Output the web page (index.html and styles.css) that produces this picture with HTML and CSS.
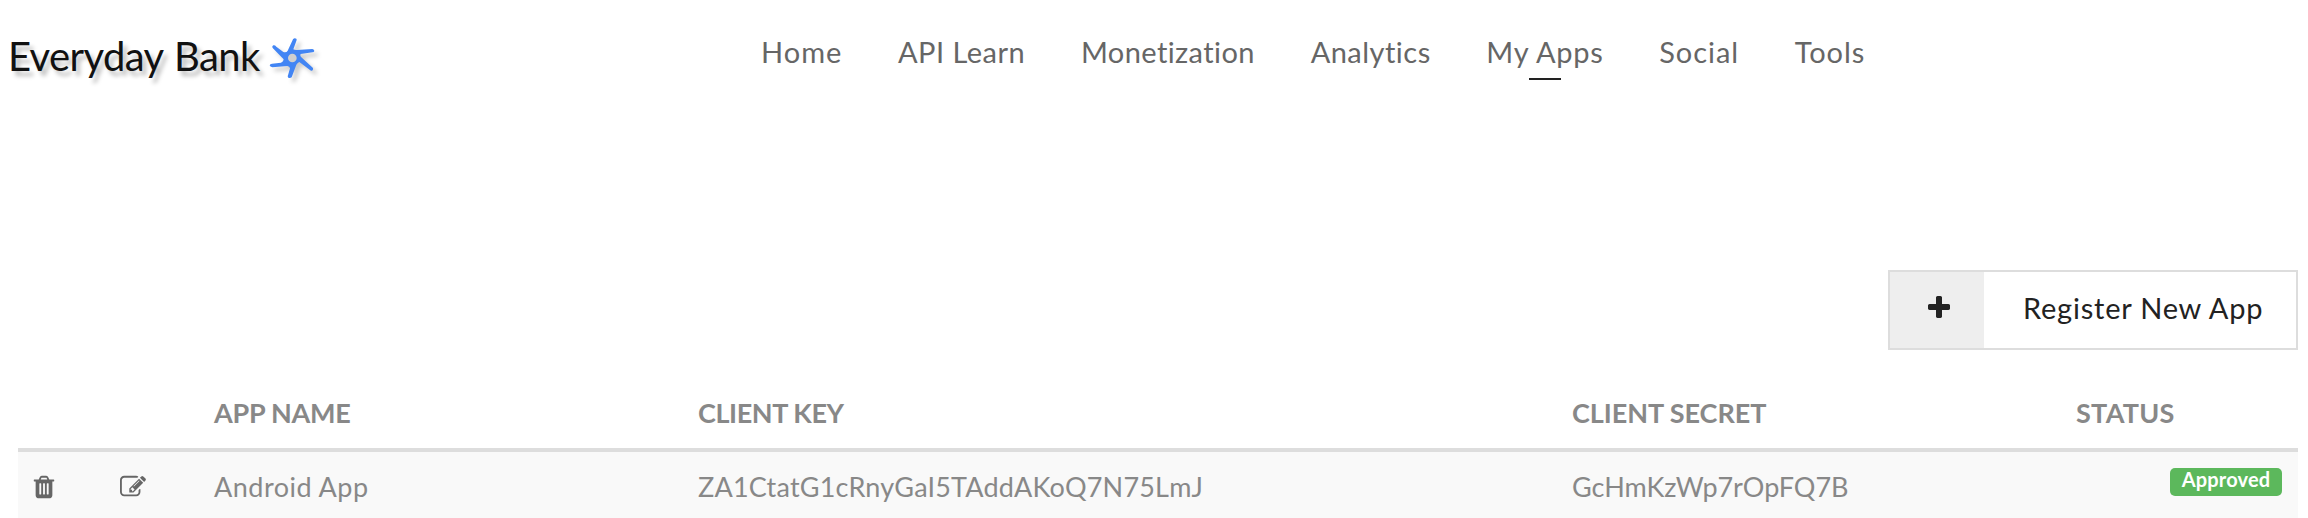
FILE: index.html
```
<!DOCTYPE html>
<html lang="en">
<head>
<meta charset="utf-8">
<title>My Apps</title>
<link rel="stylesheet" href="styles.css">
</head>
<body>
<header class="header">
  <a class="logo"><span class="logo-first">Everyday</span> <span class="logo-second">Bank</span>
    <svg class="logo-mark" viewBox="24 33 150 132">
      <path fill="#4285f4" d="M99 43Q103 38 109 41Q111 44 109 48L100 73Q105 76 111 75L157 72Q163 74 163 78Q162 82 157 82L122 87Q119 92 124 97L159 129Q160 135 156 137Q151 138 147 133L118 111Q113 113 109 119L95 157Q90 161 85 158Q82 155 84 151L90 130Q89 124 82 123L37 127Q30 126 29 121Q30 116 36 116L63 113Q71 110 71 103L38 69Q35 64 40 61Q45 60 49 65L70 81Q79 84 83 77Z"/>
      <circle cx="97" cy="99" r="13" fill="#cfcfcf"/>
    </svg>
  </a>
  <nav class="nav">
    <a class="nav-item home">Home</a>
    <a class="nav-item learn">API Learn</a>
    <a class="nav-item monetization">Monetization</a>
    <a class="nav-item analytics">Analytics</a>
    <a class="nav-item active">My Apps</a>
    <a class="nav-item social">Social</a>
    <a class="nav-item tools">Tools</a>
  </nav>
</header>
<main class="main">
  <div class="toolbar">
    <a class="register">
      <span class="register-icon"><svg class="plus" viewBox="0 0 1792 1792"><path d="M1600 736v192q0 40-28 68t-68 28h-416v416q0 40-28 68t-68 28h-192q-40 0-68-28t-28-68v-416h-416q-40 0-68-28t-28-68v-192q0-40 28-68t68-28h416v-416q0-40 28-68t68-28h192q40 0 68 28t28 68v416h416q40 0 68 28t28 68z"/></svg></span>
      <span class="register-text">Register New App</span>
    </a>
  </div>
  <div class="table">
    <div class="row head">
      <span></span><span></span>
      <span class="h-name">APP NAME</span>
      <span class="h-key">CLIENT KEY</span>
      <span class="h-secret">CLIENT SECRET</span>
      <span class="h-status">STATUS</span>
    </div>
    <div class="row body-row">
      <span><svg class="icon" viewBox="0 0 1792 1792"><path d="M704 1376v-704q0-14-9-23t-23-9h-64q-14 0-23 9t-9 23v704q0 14 9 23t23 9h64q14 0 23-9t9-23zm256 0v-704q0-14-9-23t-23-9h-64q-14 0-23 9t-9 23v704q0 14 9 23t23 9h64q14 0 23-9t9-23zm256 0v-704q0-14-9-23t-23-9h-64q-14 0-23 9t-9 23v704q0 14 9 23t23 9h64q14 0 23-9t9-23zm-544-992h448l-48-117q-7-9-17-11h-317q-10 2-17 11zm928 32v64q0 14-9 23t-23 9h-96v948q0 83-47 143.5t-113 60.5h-832q-66 0-113-58.5t-47-141.5v-952h-96q-14 0-23-9t-9-23v-64q0-14 9-23t23-9h309l70-167q15-37 54-63t79-26h320q40 0 79 26t54 63l70 167h309q14 0 23 9t9 23z"/></svg></span>
      <span><svg class="icon" viewBox="0 0 1792 1792"><path d="M888 1184l116-116-152-152-116 116v56h96v96h56zm440-720q-16-16-33 1l-350 350q-17 17-1 33t33-1l350-350q17-17 1-33zm80 594v190q0 119-84.5 203.5t-203.5 84.5h-832q-119 0-203.5-84.5t-84.5-203.5v-832q0-119 84.5-203.5t203.5-84.5h832q63 0 117 25 15 7 18 23 3 17-9 29l-49 49q-14 14-32 8-23-6-45-6h-832q-66 0-113 47t-47 113v832q0 66 47 113t113 47h832q66 0 113-47t47-113v-126q0-13 9-22l64-64q15-15 35-7t20 29zm-96-738l288 288-672 672h-288v-288zm444 132l-92 92-288-288 92-92q28-28 68-28t68 28l152 152q28 28 28 68t-28 68z"/></svg></span>
      <span class="c-name">Android App</span>
      <span class="c-key">ZA1CtatG1cRnyGaI5TAddAKoQ7N75LmJ</span>
      <span class="c-secret">GcHmKzWp7rOpFQ7B</span>
      <span class="c-status"><span class="badge">Approved</span></span>
    </div>
  </div>
</main>
</body>
</html>
```
FILE: styles.css
```
body {
  margin: 0;
  height: 518px;
  overflow: hidden;
  background: #fff;
  font-family: Lato, "Liberation Sans", sans-serif;
  white-space: nowrap;
}

.header {
  display: flex;
  height: 270px;
}

.logo {
  display: flex;
  align-items: flex-start;
  width: 753px;
  padding: 36px 0 0 8px;
  color: #111;
  font-size: 40px;
  line-height: 40px;
  letter-spacing: -0.6px;
  text-shadow: 4px 5px 4px rgba(0, 0, 0, 0.25);
}

.logo-first {
  width: 166px;
}

.logo-second {
  width: 86px;
}

.logo-mark {
  width: 50px;
  height: 44px;
  margin: 0 0 0 8px;
  filter: drop-shadow(4px 4px 2px rgba(0, 0, 0, 0.2));
}

.nav {
  display: flex;
  align-items: flex-start;
  gap: 55.7px;
  padding-top: 32px;
  color: #666;
  font-size: 29px;
  line-height: 40px;
}

.nav-item.home { letter-spacing: 1px; }
.nav-item.learn { letter-spacing: 0.48px; }
.nav-item.monetization { letter-spacing: 0.42px; }
.nav-item.analytics { letter-spacing: 0.48px; }
.nav-item.social { letter-spacing: 0.94px; }
.nav-item.tools { letter-spacing: 0.92px; }

.nav-item.active {
  display: flex;
  flex-direction: column;
  align-items: center;
  letter-spacing: 0.75px;
}

.nav-item.active::after {
  content: "";
  width: 32px;
  height: 2px;
  margin-top: 6px;
  background: #222;
}

.toolbar {
  display: flex;
  justify-content: flex-end;
  padding-right: 10px;
}

.register {
  box-sizing: border-box;
  display: flex;
  width: 410px;
  height: 80px;
  border: 2px solid #ddd;
  color: #222;
}

.register-icon {
  width: 94px;
  background: #eee;
}

.plus {
  display: block;
  width: 28px;
  height: 28px;
  margin: 22px 0 0 35px;
  fill: #222;
}

.register-text {
  padding: 16px 0 0 39px;
  font-size: 29px;
  line-height: 40px;
  letter-spacing: 0.78px;
}

.table {
  margin: 30px 10px 0 18px;
}

.row {
  display: grid;
  grid-template-columns: 89px 94px 484px 874px 504px 1fr;
  padding-left: 13px;
  color: #888;
  font-size: 27px;
  line-height: 40px;
}

.head {
  height: 55px;
  padding-top: 13px;
  border-bottom: 4px solid #ddd;
  font-weight: 700;
}

.h-name { letter-spacing: -0.25px; }
.h-key { letter-spacing: -0.4px; }
.h-secret { letter-spacing: -0.05px; }
.h-status { letter-spacing: 0.26px; }

.body-row {
  height: 51px;
  padding-top: 15px;
  background: #f9f9f9;
}

.icon {
  display: block;
  width: 26px;
  height: 26px;
  margin-top: 6.5px;
  fill: #666;
}

.c-name { letter-spacing: 0.5px; }
.c-key { letter-spacing: 0.19px; }
.c-secret { letter-spacing: -0.06px; }

.c-status {
  display: flex;
  justify-content: flex-end;
  align-items: flex-start;
  margin: 1px 16px 0 0;
}

.badge {
  box-sizing: border-box;
  width: 112px;
  height: 28px;
  border-radius: 5px;
  background: #5cb85c;
  color: #fff;
  font-size: 20px;
  font-weight: 700;
  line-height: 22px;
  letter-spacing: 0.16px;
  text-align: center;
}
```
